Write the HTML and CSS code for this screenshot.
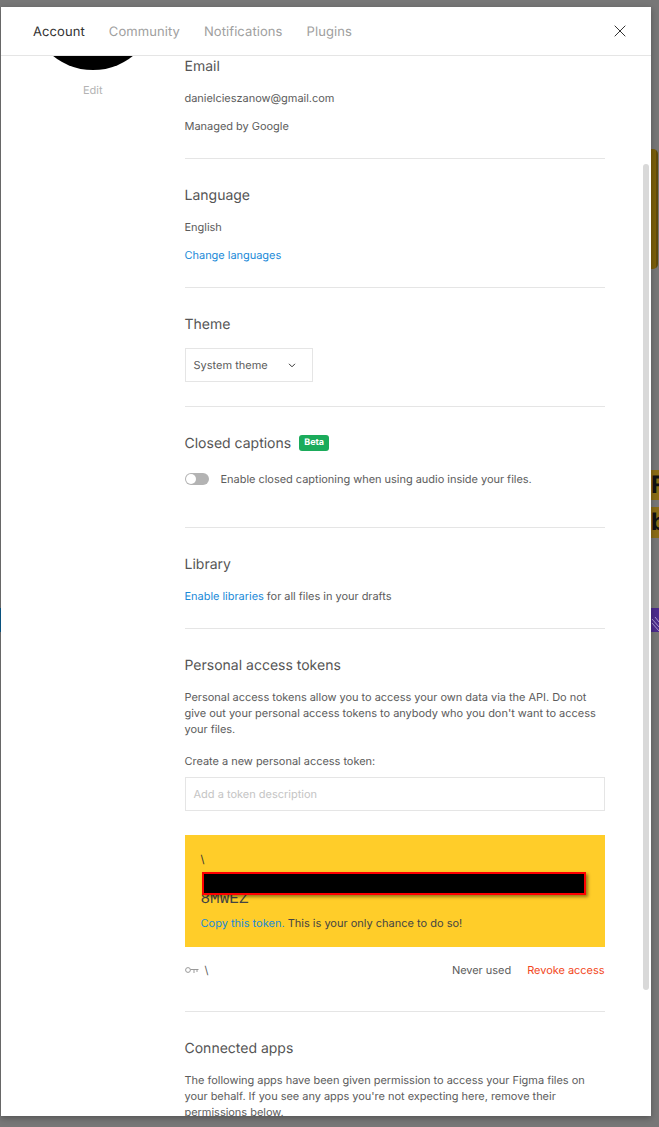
FILE: index.html
```html
<!DOCTYPE html>
<html lang="en">
<head>
<meta charset="utf-8">
<title>Settings</title>
<link rel="stylesheet" href="styles.css">
</head>
<body>
<div class="sliver sliver-amber"></div>
<div class="sliver sliver-f">F</div>
<div class="sliver sliver-b">b</div>
<div class="sliver sliver-purple">
  <svg class="scribble" width="8" height="24" viewBox="0 0 8 24"><path d="M1 11l7 8M1 15l7 8M4 9l4 5" stroke="#a99bd0" stroke-width="1" fill="none"/></svg>
</div>
<div class="sliver sliver-blue"></div>
<div class="modal">
  <header class="tabs">
    <nav class="tab-list">
      <span class="tab tab-active">Account</span>
      <span class="tab">Community</span>
      <span class="tab">Notifications</span>
      <span class="tab">Plugins</span>
    </nav>
    <svg class="close" width="12" height="12" viewBox="0 0 12 12"><path d="M.7.7l10.6 10.6M11.3.7L.7 11.3" stroke="#333" stroke-width="1" fill="none"/></svg>
  </header>
  <div class="body">
    <aside class="side">
      <div class="avatar"></div>
      <div class="edit">Edit</div>
    </aside>
    <main class="content">
      <section class="section section-first">
        <h2 class="title">Email</h2>
        <p class="text">danielcieszanow@gmail.com</p>
        <p class="text">Managed by Google</p>
      </section>
      <section class="section">
        <h2 class="title">Language</h2>
        <p class="text">English</p>
        <p class="text"><a class="link">Change languages</a></p>
      </section>
      <section class="section">
        <h2 class="title">Theme</h2>
        <div class="select">
          <span>System theme</span>
          <svg width="8" height="5" viewBox="0 0 8 5"><path d="M1 .8l3 3 3-3" stroke="#333" stroke-width="1" fill="none"/></svg>
        </div>
      </section>
      <section class="section section-captions">
        <h2 class="title">Closed captions <span class="badge">Beta</span></h2>
        <div class="toggle-row">
          <span class="toggle"><span class="knob"></span></span>
          <span class="text">Enable closed captioning when using audio inside your files.</span>
        </div>
      </section>
      <section class="section">
        <h2 class="title">Library</h2>
        <p class="text"><a class="link">Enable libraries</a> for all files in your drafts</p>
      </section>
      <section class="section">
        <h2 class="title">Personal access tokens</h2>
        <p class="text text-wide">Personal access tokens allow you to access your own data via the API. Do not give out your personal access tokens to anybody who you don't want to access your files.</p>
        <p class="text text-label">Create a new personal access token:</p>
        <div class="input">Add a token description</div>
        <div class="token-box">
          <div class="token-name">\</div>
          <div class="token-value">&nbsp;<br>8MWEZ</div>
          <div class="redaction"></div>
          <div class="token-note"><a class="link">Copy this token.</a> This is your only chance to do so!</div>
        </div>
        <div class="token-row">
          <svg class="key" width="14" height="7" viewBox="0 0 14 7"><circle cx="3" cy="3" r="2.4" fill="none" stroke="#999"/><path d="M5.5 2.5H13.5M9 2.5V6M12 2.5V5" stroke="#999" fill="none"/></svg>
          <span class="text token-slash">\</span>
          <span class="text token-used">Never used</span>
          <a class="revoke">Revoke access</a>
        </div>
      </section>
      <section class="section section-last">
        <h2 class="title">Connected apps</h2>
        <p class="text text-wide">The following apps have been given permission to access your Figma files on your behalf. If you see any apps you're not expecting here, remove their permissions below.</p>
      </section>
    </main>
    <div class="scrollbar"></div>
  </div>
</div>
</body>
</html>
```
FILE: styles.css
```css
* { box-sizing: border-box; }
html, body { margin: 0; height: 100%; }
body {
  background: #777;
  font-family: Inter, "Liberation Sans", sans-serif;
  text-rendering: geometricPrecision;
  overflow: hidden;
  position: relative;
}
.sliver { position: absolute; overflow: hidden; }
.sliver-amber {
  left: 651px;
  top: 149px;
  width: 7px;
  height: 120px;
  border-radius: 0 5px 5px 0;
  background: linear-gradient(#5f4a0c, #5f4a0c) 5px 4px / 2px 2px repeat-y, #7a5e0b;
  background-size: 2px 11px;
}
.sliver-f, .sliver-b { left: 651px; width: 8px; background: #8a6c16; color: #111; font-size: 24px; font-weight: 700; line-height: 30px; }
.sliver-f { top: 470px; height: 30px; }
.sliver-b { top: 507px; height: 31px; }
.sliver-purple { left: 651px; top: 608px; width: 8px; height: 24px; background: #4b2a8c; }
.scribble { display: block; }
.sliver-blue { left: 0; top: 608px; width: 1px; height: 24px; background: #0b5d91; }
.modal {
  position: absolute;
  left: 1px;
  top: 7px;
  width: 650px;
  height: 1109px;
  background: #fff;
  overflow: hidden;
  display: flex;
  flex-direction: column;
  box-shadow: 0 2px 6px rgba(0, 0, 0, .3);
}
.tabs {
  flex: none;
  height: 49px;
  display: flex;
  align-items: center;
  justify-content: space-between;
  padding: 0 25px 0 32px;
  border-bottom: 1px solid #e5e5e5;
  background: #fff;
  position: relative;
  z-index: 1;
}
.tab-list { display: flex; gap: 24px; }
.tab { font-size: 13px; letter-spacing: .08px; color: #a0a0a0; line-height: 24px; padding-top: 1px; }
.tab-active { color: #333; }
.close { display: block; }
.body { flex: 1; display: flex; min-height: 0; position: relative; }
.side { flex: none; width: 183.5px; display: flex; flex-direction: column; align-items: center; }
.avatar { flex: none; width: 128px; height: 128px; border-radius: 50%; background: #000; margin-top: -114px; }
.edit { margin-top: 12px; font-size: 11px; line-height: 16px; color: #b3b3b3; }
.content { flex: none; width: 420.5px; margin-top: -2px; }
.section {
  padding: 24px 0;
  border-top: 1px solid #e5e5e5;
  display: flex;
  flex-direction: column;
  align-items: flex-start;
  gap: 12px;
}
.section-first { padding-top: 0; border-top: 0; }
.section-captions { padding-bottom: 40px; gap: 16px; }
.section-last { padding-bottom: 0; }
.title {
  margin: 0;
  height: 24px;
  padding-top: 1px;
  font-size: 14px;
  font-weight: 400;
  line-height: 24px;
  color: #555;
  display: flex;
  align-items: center;
  gap: 8px;
}
.badge { margin-top: -1px; }
.text { margin: 0; font-size: 11px; line-height: 16px; color: #5c5c5c; letter-spacing: -.03px; }
.text-label { margin-top: 4px; margin-bottom: -4px; }
.link { color: #1a8ad8; }
.select {
  width: 128px;
  height: 34px;
  border: 1px solid #e5e5e5;
  display: flex;
  align-items: center;
  justify-content: space-between;
  padding: 0 16px 0 8px;
  font-size: 11px;
  color: #5c5c5c;
}
.badge {
  background: #1bab5b;
  color: #fff;
  font-size: 9px;
  font-weight: 700;
  line-height: 16px;
  padding: 0 5px;
  border-radius: 3px;
}
.toggle-row { display: flex; align-items: center; gap: 12px; }
.toggle { width: 24px; height: 12px; border-radius: 6px; background: #b3b3b3; display: block; padding: 1px; }
.knob { display: block; width: 10px; height: 10px; border-radius: 50%; background: #fff; }
.input {
  width: 420px;
  height: 34px;
  border: 1px solid #e5e5e5;
  display: flex;
  align-items: center;
  padding: 0 8px;
  font-size: 11px;
  color: #c4c4c4;
}
.token-box {
  width: 420px;
  height: 112px;
  background: #ffcd29;
  padding: 16px;
  position: relative;
  margin-top: 12px;
}
.token-name { font-size: 11px; line-height: 16px; color: #333; }
.token-value { font-family: "Liberation Mono", monospace; font-size: 16px; line-height: 20px; color: #444; margin: 2px 0 6px; }
.redaction {
  position: absolute;
  left: 17px;
  top: 37px;
  width: 384px;
  height: 23px;
  background: #000;
  border: 2px solid #f00;
  box-shadow: 2px 2px 3px rgba(0, 0, 0, .4);
}
.token-note { font-size: 11px; line-height: 16px; color: #444; }
.token-row { width: 420px; display: flex; align-items: center; margin: 3px 0 9px; }
.key { display: block; }
.token-slash { margin-left: 6px; }
.token-used { margin-left: auto; }
.revoke { margin-left: 16px; font-size: 11px; line-height: 16px; color: #f24822; letter-spacing: -.03px; }
.scrollbar { position: absolute; left: 642px; top: 108px; width: 6px; height: 826px; border-radius: 3px; background: #d9d9d9; }
```
